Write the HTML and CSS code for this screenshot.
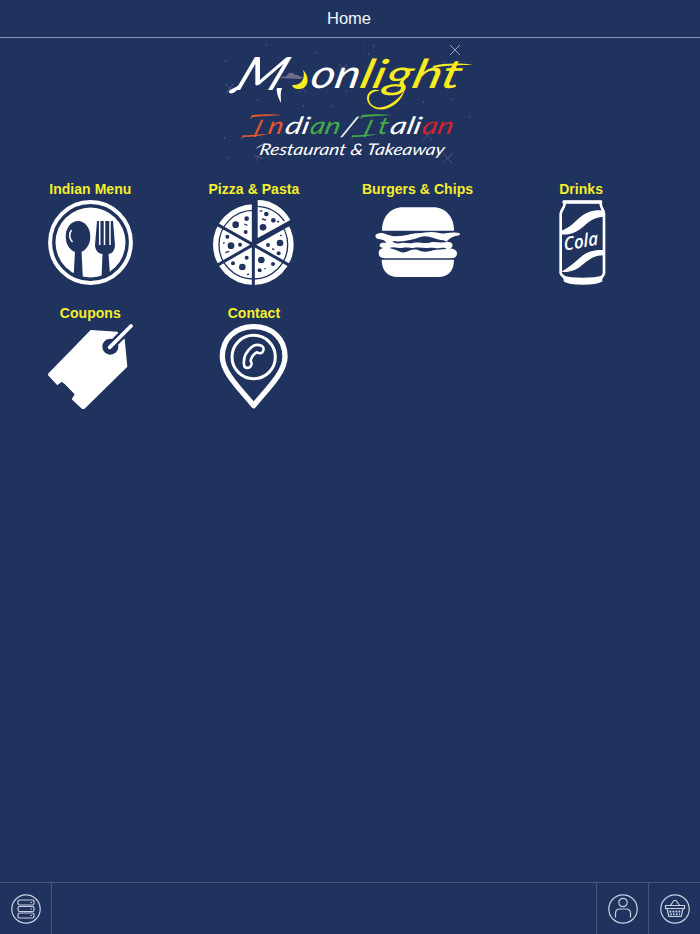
FILE: index.html
```html
<!DOCTYPE html>
<html lang="en">
<head>
    <meta charset="UTF-8">
    <title>Home</title>
    <link rel="stylesheet" href="styles.css">
</head>
<body>
<div id="app">
    <header class="topbar">Home</header>
    <div class="logo">
        <svg width="280" height="130" viewBox="0 0 280 130">
            <g class="stars">
                <path class="bright" d="M240 5l10 10M250 5l-10 10"/>
                <path d="M15 44l9 8M24 43l-8 10M129 24l8 9M137 24l-8 9M88 44l9 9M97 44l-9 9M213 91l9 9M222 91l-9 9M233 113l9 10M243 113l-10 10M44 115l9 4M52 110l-6 11M233 21l7 7"/>
                <path class="dots" d="M15 21h1M56 5h1M105 13h1M154 8h1M163 6h1M158 14h1M47 60h1M93 66h1M122 66h1M213 62h1M242 59h1M259 77h1M14 98h1M18 118h1M136 51h1"/>
            </g>
            <g class="brush">
                <text class="m" transform="translate(23 50) skewX(-24)" textLength="46" lengthAdjust="spacingAndGlyphs">M</text>
                <text class="word" transform="translate(99 48) skewX(-12)" textLength="49" lengthAdjust="spacingAndGlyphs">on</text>
                <text class="word yellow" transform="translate(148 48) skewX(-14)" textLength="101" lengthAdjust="spacingAndGlyphs">light</text>
            </g>
            <!-- brush flourishes around the name -->
            <path fill="#fff" d="M33 42c-3 4-11 6-14 9-1 4 5 3 8-1 3-3 5-5 6-8zM67 48c-1 4 1 9 4 15 0-5-1-10 1-15z"/>
            <path fill="#f8ec20" d="M170 51c-9-1-14 6-9 13 8 9 27-1 34-15-4 17-24 26-34 17-9-8-1-20 9-15zM223 26c12-3 27-3 40-1-13 0-26 0-40 3z"/>
            <path fill="#f8ec20" d="M93 30c8 8 5 19-4 19-4 0-6-1-7-4 8 1 14-5 11-15z"/>
            <path fill="#706c8c" d="M70 38c2-2 6-1 7-2 1-4 6-4 8-1 3-1 4 2 7 2 3 0 0 1-2 2z"/>
            <g class="sub">
                <text class="orange" transform="translate(42 97) skewX(-18)">I</text>
                <text class="orange" transform="translate(57 94) skewX(-12)" textLength="15" lengthAdjust="spacingAndGlyphs">n</text>
                <text transform="translate(74 94) skewX(-12)" textLength="24" lengthAdjust="spacingAndGlyphs">di</text>
                <text class="green" transform="translate(99 94) skewX(-12)" textLength="30" lengthAdjust="spacingAndGlyphs">an</text>
                <text class="slash" transform="translate(131 96) skewX(-18)">/</text>
                <text class="green" transform="translate(152 97) skewX(-18)">I</text>
                <text class="green" transform="translate(167 94) skewX(-12)" textLength="10" lengthAdjust="spacingAndGlyphs">t</text>
                <text transform="translate(179 94) skewX(-12)" textLength="31" lengthAdjust="spacingAndGlyphs">ali</text>
                <text class="red" transform="translate(211 94) skewX(-12)" textLength="31" lengthAdjust="spacingAndGlyphs">an</text>
                <path class="orange" d="M40 79l2-4c10-1 20-1 30 0-10 1-20 1-29 2zM31 99l2-4c8 1 17-1 25-1-8 2-16 3-24 3z"/>
                <path class="green" d="M150 79l2-4c10-1 20-1 30 0-10 1-20 1-29 2zM141 98l2-3c8 1 17-1 25-1-8 2-16 3-24 3z"/>
            </g>
            <text class="tagline" transform="translate(49 115) skewX(-10)" textLength="185" lengthAdjust="spacingAndGlyphs">Restaurant &amp; Takeaway</text>
            <path fill="#fff" d="M45 110c3-4 6-5 10-6-4 2-7 3-10 6z"/>
        </svg>
    </div>

    <main class="menu">
        <a class="item">
            <span>Indian Menu</span>
            <svg viewBox="0 0 85 85">
                <circle class="line" cx="42.5" cy="42.5" r="40.4" stroke-width="4"/>
                <circle cx="42.5" cy="42.5" r="35"/>
                <g class="dark">
                    <ellipse cx="30" cy="36.7" rx="12.3" ry="15.7"/>
                    <path d="M27 50h6.500l1.300 27-9-3z"/>
                    <path d="M49 21h16l2 24c0 5-3 9-6.500 9l1.500 21-8.500 3 1-24c-4 0-7.500-4-7.500-9z"/>
                </g>
                <path class="line" d="M23.500 30c-3 4-2 9 1 12" stroke-width="1.500"/>
                <path class="line" d="M51.700 20v25M56.500 20v25M62 20v25" stroke-width="1.500"/>
            </svg>
        </a>
        <a class="item">
            <span>Pizza &amp; Pasta</span>
            <svg viewBox="0 0 255 255">
                <circle cx="127" cy="134" r="121"/>
                <circle class="cut" cx="127" cy="134" r="103" stroke-width="4"/>
                <path class="dark" d="M127 134V0h128v63z"/>
                <path class="cut" d="M127 0v255M13 70l228 129M13 199L127 134 250 65" stroke-width="9"/>
                <path d="M140 114V0c40 0 77 22 98 60z"/>
                <path class="cut" d="M140 19c32 2 60 16 80 44" stroke-width="4"/>
                <g class="dark">
                    <circle cx="74" cy="74" r="10"/><circle cx="107" cy="56" r="7"/><circle cx="104" cy="96" r="6"/>
                    <circle cx="49" cy="110" r="6"/><circle cx="60" cy="137" r="10"/><circle cx="87" cy="134" r="6"/>
                    <circle cx="66" cy="190" r="6"/><circle cx="94" cy="201" r="10"/><circle cx="107" cy="173" r="6"/>
                    <circle cx="151" cy="180" r="10"/><circle cx="186" cy="192" r="6"/><circle cx="146" cy="211" r="6"/>
                    <circle cx="207" cy="129" r="10"/><circle cx="171" cy="135" r="6"/><circle cx="203" cy="160" r="6"/>
                    <circle cx="156" cy="82" r="10"/><circle cx="166" cy="42" r="7"/><circle cx="187" cy="61" r="7"/>
                </g>
                <path class="cut" d="M100 72l9 4M153 57l12 3M43 158l12-4M36 130l5-2M183 147l7 1M207 107l5-1M198 64l6 2M146 34l8-2M108 224l6-2M164 206h-4" stroke-width="4"/>
            </svg>
        </a>
        <a class="item">
            <span>Burgers &amp; Chips</span>
            <svg viewBox="0 0 255 255">
                <path d="M21 92c0-40 24-70 63-70h90c39 0 63 30 63 70z"/>
                <path d="M1 108c2-8 14-10 24-8 14 3 20 9 38 9 30-1 47-9 64-9 18-1 28-4 42-4 18 0 29 7 42 4 20-3 34-3 44 1l-1 4c-12 4-19 4-27 9l-12 10c7 4 14 1 17 9 2 7-2 11-9 12 14 2 23 5 23 15 0 10-7 15-18 15H33c-14 0-22-5-22-16 0-8 5-14 16-15-8-2-14-3-13-9 1-8 14-7 21-6l-8-8C17 117 2 119 1 108z"/>
                <g class="dark">
                    <path d="M52 123c34 4 58-3 84-12 24-8 43 8 69 10l12 4c-25 6-34-2-54 3-19 4-30-3-47 0-16 4-27-2-40 2-14 2-22-3-24-7z"/>
                    <path d="M43 144c15-6 25 1 38 0 16-3 24 0 34 0 15-3 26 1 43 0 17-3 24 2 39 0 11-2 16 1 18 3-19 2-30 0-47 6-21 4-28 2-39-3-15-4-24 1-34 5-14 6-22-1-30-4z"/>
                </g>
                <path d="M20 179h217c0 30-15 52-48 52H69c-33 0-49-22-49-52z"/>
            </svg>
        </a>
        <a class="item">
            <span>Drinks</span>
            <svg viewBox="0 0 255 255">
                <path class="line" d="M77 6h108c-2 18 10 23 10 36v178c0 6-7 9-9 14v8c-18 11-91 11-108 0v-8c-2-5-13-8-13-14V42c0-13 14-18 12-36z" stroke-width="8"/>
                <path d="M74 1h112q4 0 4 5t-4 5H74q-4 0-4-5t4-5zM66 93c28-10 38-25 61-44 20-17 43-20 69-18v19c-25 0-42 11-60 27-22 20-42 29-70 26zM66 216c26-16 44-31 64-49 19-15 41-18 66-17v16c-24-1-40 8-60 24-22 20-42 28-70 26zM66 226c36 10 94 10 130 0l-10 17c-26 10-82 10-108 0z"/>
                <text class="cola" transform="translate(76 152) rotate(-10) skewX(-5)" textLength="104" lengthAdjust="spacingAndGlyphs">Cola</text>
            </svg>
        </a>
        <a class="item">
            <span>Coupons</span>
            <svg viewBox="0 0 255 255">
                <path d="M128 18l80 5 22 22 8 83-126 124q-6 6-12 1L71 226l9-15-30-31-9-7-13 11L3 157q-6-5 0-11z"/>
                <circle class="dark" cx="187" cy="68" r="24"/>
                <path class="cut" d="M187 68L247 8" stroke-width="25"/>
                <path class="line" d="M185 70L249 6" stroke-width="11" stroke-linecap="round"/>
            </svg>
        </a>
        <a class="item">
            <span>Contact</span>
            <svg viewBox="0 0 255 255">
                <path class="line" d="M128 245C96 203 34 148 34 98 34 44 73 8 128 8s94 36 94 90c0 50-62 105-94 147z" stroke-width="16" stroke-linejoin="round"/>
                <circle class="line" cx="128" cy="99" r="65" stroke-width="9"/>
                <path class="line" d="M121 70c9-9 22-8 32-4 7 5 5 15 1 19-5 5-12 2-16 0-11 5-19 17-19 26 4 5 3 13-1 17-6 5-15 5-18-1-5-23 5-43 21-57z" stroke-width="8" stroke-linejoin="round"/>
            </svg>
        </a>
    </main>

    <footer class="bottombar">
        <a class="btn">
            <svg viewBox="0 0 30 30">
                <circle cx="15" cy="15" r="14.200"/>
                <rect x="7" y="6" width="16" height="5" rx="1.500"/>
                <rect x="7" y="12.500" width="16" height="5" rx="1.500"/>
                <rect x="7" y="19" width="16" height="5" rx="1.500"/>
                <path d="M19.500 8.500h1.500M19.500 15h1.500M19.500 21.500h1.500"/>
            </svg>
        </a>
        <div class="space"></div>
        <a class="btn">
            <svg viewBox="0 0 30 30">
                <circle cx="15" cy="15" r="14.200"/>
                <circle cx="15" cy="8.500" r="4.200"/>
                <path d="M7.500 23.500v-4c0-3 1.500-4.500 4.500-4.500h6c3 0 4.500 1.500 4.500 4.500v4"/>
            </svg>
        </a>
        <a class="btn">
            <svg viewBox="0 0 30 30">
                <circle cx="15" cy="15" r="14.200"/>
                <path d="M5.500 11.500h19v3h-19zM7 14.500l1.800 8h12.400l1.800-8M10 12l4-5.500h2l4 5.500"/>
                <path d="M9.500 17.500h11M10 20.300h10" stroke-width="1.800" stroke-dasharray="1.800 1.200"/>
            </svg>
        </a>
    </footer>
</div>
</body>
</html>
```
FILE: styles.css
```css
*{
    margin: 0;
    padding: 0;
    box-sizing: border-box;
}
body{
    background: #20335f;
    font-family: "Liberation Sans", Arial, sans-serif;
}
#app{
    display: flex;
    flex-direction: column;
    height: 934px;
}
.topbar{
    height: 38px;
    line-height: 36px;
    border-bottom: 1px solid #8c98b0;
    text-align: center;
    color: #f4f6fa;
    font-size: 16.5px;
    padding-right: 2px;
}
.logo{
    height: 140px;
    padding-top: 2px;
    text-align: center;
}
.stars path{
    stroke: #54608a;
    stroke-width: 0.8;
    fill: none;
}
.stars .bright{
    stroke: #b5b9ca;
}
.stars .dots{
    stroke: #49557f;
    stroke-width: 2;
}
.logo text{
    font-family: Lato, sans-serif;
    font-style: italic;
    fill: #fff;
}
.brush .m{
    font-size: 46px;
}
.brush .word{
    font-size: 40px;
}
.sub text{
    font-size: 24px;
}
.sub .slash{
    font-size: 27px;
}
.logo .yellow{
    fill: #f8ec20;
}
.logo .orange{
    fill: #e8562d;
}
.logo .green{
    fill: #45ac49;
}
.logo .red{
    fill: #d4202f;
}
.logo .tagline{
    font-size: 16px;
}
.menu{
    flex: 1;
    display: grid;
    grid-template-columns: repeat(4, 163.6px);
    grid-auto-rows: 124px;
    padding-left: 8.5px;
}
.item{
    display: flex;
    flex-direction: column;
    align-items: center;
    color: #f5ee2b;
    font-size: 14px;
    font-weight: bold;
    letter-spacing: 0.05px;
}
.item span{
    height: 22px;
    line-height: 22px;
}
.item svg{
    width: 85px;
    height: 85px;
    fill: #fff;
}
.item .dark{
    fill: #20335f;
}
.item .line{
    fill: none;
    stroke: #fff;
}
.item .cut{
    fill: none;
    stroke: #20335f;
}
.cola{
    font: italic 600 55px "Open Sans", sans-serif;
}
.bottombar{
    display: flex;
    height: 52px;
    border-top: 1px solid #46567d;
}
.btn{
    width: 52px;
    display: flex;
    align-items: center;
    justify-content: center;
    border-left: 1px solid #46567d;
}
.btn:first-child{
    border-left: 0;
    border-right: 1px solid #46567d;
}
.btn svg{
    width: 30px;
    height: 30px;
    fill: none;
    stroke: #c9d0e0;
    stroke-width: 1.2;
}
.space{
    flex: 1;
}
```
